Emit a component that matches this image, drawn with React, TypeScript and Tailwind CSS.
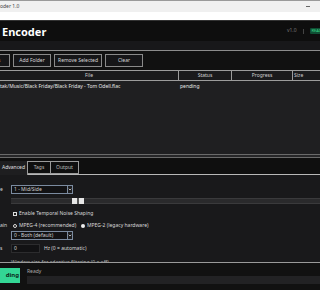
import { ChevronDown } from "lucide-react";

const font = { fontFamily: '"Noto Sans", "DejaVu Sans", sans-serif' };

function Btn({ label, className = "" }: { label: string; className?: string }) {
  return (
    <button
      className={`h-[13px] shrink-0 whitespace-nowrap border border-[#8a8a8a] bg-[#161618] px-0 text-[5px] leading-none text-[#d8d8d8] ${className}`}
    >
      {label}
    </button>
  );
}

function Select({ value }: { value: string }) {
  return (
    <div className="flex h-[9px] w-[62px] items-center border border-[#7b8ba0] bg-[#121214]">
      <span className="flex-1 truncate pl-[2px] text-[5px] leading-none text-[#d0d0d0]">{value}</span>
      <span className="flex h-full w-[5px] items-center justify-center border-l border-[#7b8ba0] bg-[#1e1e20]">
        <ChevronDown size={5} strokeWidth={4} className="text-white" />
      </span>
    </div>
  );
}

export default function App() {
  return (
    <div className="h-[290px] w-[320px] overflow-hidden bg-[#111]" style={font}>
      {/* title bar */}
      <div className="flex h-[12px] items-center justify-between border-t border-[#9a9a9a] bg-[#f0f0f0] pr-[10px]">
        <span className="text-[5px] leading-none text-[#444]">oder 1.0</span>
        <span className="h-px w-[4px] bg-[#666]" />
      </div>
      <div className="h-[8px] bg-white" />

      {/* header */}
      <div className="flex h-[21px] items-center justify-between border-t border-[#333] bg-[#0e0e0e] pl-[2px]">
        <span className="text-[11px] font-bold leading-none text-white">Encoder</span>
        <div className="-mr-[6px] flex items-center gap-[6px]">
          <span className="text-[5px] text-[#777]">v1.0</span>
          <span className="h-[5px] w-px bg-[#444]" />
          <span className="rounded-l-[1px] bg-[#0f4f34] px-[2px] text-[4px] leading-[6px] text-[#39d98a]">READY</span>
        </div>
      </div>
      <div className="h-[9px] bg-[#18181a]" />

      {/* toolbar */}
      <div className="flex h-[20px] items-center gap-[3px] border-t border-[#8c8c8c] bg-[#111]">
        <Btn label="Add Files" className="-ml-[30px] w-[40px]" />
        <Btn label="Add Folder" className="w-[38px]" />
        <Btn label="Remove Selected" className="w-[48px]" />
        <Btn label="Clear" className="w-[38px]" />
      </div>

      {/* file table */}
      <div className="flex h-[11px] border-y border-[#9c9c9c] bg-[#1a1a1c] text-[5px] leading-none text-[#cfcfcf]">
        <div className="flex w-[178px] items-center justify-center">File</div>
        <div className="flex w-[54px] items-center justify-center border-x border-[#9c9c9c]">Status</div>
        <div className="flex w-[61px] items-center justify-center border-r border-[#9c9c9c]">Progress</div>
        <div className="flex flex-1 items-center pl-[1px] whitespace-nowrap">Size</div>
      </div>
      <div className="h-[73px] bg-[#1f1f21] pt-[3px] text-[5px] leading-none text-[#e8e8e8]">
        <div className="flex">
          <span className="w-[180px] whitespace-nowrap">tak/Music/Black Friday/Black Friday - Tom Odell.flac</span>
          <span>pending</span>
        </div>
      </div>

      {/* tabs */}
      <div className="h-[4px] border-y border-[#6a6a6a] bg-[#262628]" />
      <div className="flex h-[17px] items-end border-b border-[#b8b8b8] bg-[#0f0f0f] pt-[3px]">
        <div className="-mb-px flex h-[14px] w-[28px] items-center justify-center border-r border-[#9a9a9a] bg-[#1e1e20] text-[5px] text-[#e0e0e0]">
          Advanced
        </div>
        <div className="flex h-[13px] w-[23px] items-center justify-center self-start border-y border-r border-[#9a9a9a] text-[5px] text-[#bbb]">
          Tags
        </div>
        <div className="flex h-[13px] w-[28px] items-center justify-center self-start border-y border-r border-[#9a9a9a] text-[5px] text-[#bbb]">
          Output
        </div>
      </div>

      {/* advanced content */}
      <div className="h-[87px] overflow-hidden bg-[#19191b] pt-[10px] text-[5px] leading-none text-[#d8d8d8]">
        <div className="flex items-center gap-[7px]">
          <span className="w-[4px]">e</span>
          <Select value="1 - Mid/Side" />
        </div>
        <div className="mt-[4px] ml-[11px] flex h-[6px] items-center border-y border-[#3a3a3c] bg-[#2a2a2c]">
          <div className="ml-[61px] flex h-[6px] w-[12px] items-center justify-center bg-[#e6e6e6]">
            <span className="h-full w-[2px] bg-[#555]" />
          </div>
        </div>
        <div className="mt-[7px] ml-[13px] flex items-center gap-[2px]">
          <span className="flex h-[4px] w-[4px] items-center justify-center bg-[#ddd]">
            <span className="h-[2px] w-[2px] bg-[#222]" />
          </span>
          <span>Enable Temporal Noise Shaping</span>
        </div>
        <div className="mt-[7px] flex items-center">
          <span className="w-[13px]">ain</span>
          <span className="mr-[2px] h-[4px] w-[4px] rounded-full border border-[#ddd] bg-[#111]" />
          <span className="w-[62px]">MPEG-4 (recommended)</span>
          <span className="mr-[2px] h-[4px] w-[4px] rounded-full bg-[#eee]" />
          <span>MPEG-2 (legacy hardware)</span>
        </div>
        <div className="mt-[3px] flex items-center gap-[7px]">
          <span className="w-[4px]" />
          <Select value="0 - Both (default)" />
        </div>
        <div className="mt-[4px] flex items-center gap-[7px]">
          <span className="w-[4px]">s</span>
          <div className="flex h-[9px] w-[29px] items-center border border-[#2c2c2e] bg-[#121214] pl-[2px]">0</div>
          <span className="-ml-[3px]">Hz (0 = automatic)</span>
        </div>
        <div className="mt-[7px] flex items-center gap-[7px] text-[#aaa]">
          <span className="w-[4px]" />
          <span>Window size for adaptive filtering (0 = off)</span>
        </div>
      </div>

      {/* bottom bar */}
      <div className="flex h-[26px] items-start gap-[7px] border-t border-[#9a9a9a] bg-[#111] pt-[5px]">
        <div className="flex h-[15px] w-[20px] items-center justify-end overflow-hidden bg-[#33d695] pr-[1px] text-[6px] font-bold text-[#0b2a1c]">
          ding
        </div>
        <div className="flex-1">
          <div className="text-[5px] leading-[7px] text-[#aaa]">Ready</div>
          <div className="mt-px h-[8px] bg-[#222224]" />
        </div>
      </div>
    </div>
  );
}
